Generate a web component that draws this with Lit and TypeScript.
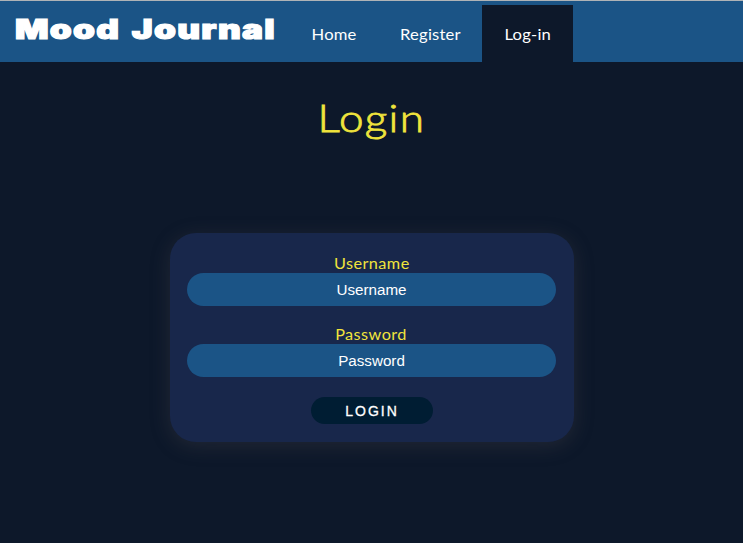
import { LitElement, html, css } from "lit";
import { customElement } from "lit/decorators.js";

@customElement("app-root")
export class AppRoot extends LitElement {
  static styles = css`
    :host { display: block; height: 543px; overflow: hidden; background: #0d182a; box-sizing: border-box; border-top: 1px solid #b0b3b6; font-family: Lato, "Open Sans", sans-serif; color: #fff; }
    * { box-sizing: border-box; }
    nav { height: 61px; background: #1b5486; display: flex; align-items: flex-start; }
    .brand { width: 290px; padding-left: 15px; height: 58px; white-space: nowrap; }
    .brand span { display: inline-block; font: 900 27px/58px Inter, sans-serif; -webkit-text-stroke: 1.2px #fff; transform: scaleX(1.3); transform-origin: left; letter-spacing: 1px; word-spacing: 2.5px; }
    .link { margin-top: 4px; height: 57px; line-height: 58px; font-size: 15.5px; text-align: center; color: #fff; text-decoration: none; white-space: nowrap; }
    .link span, h1 span, label span { display: inline-block; transform: scaleX(1.07); }
    .home { width: 89px; }
    .register { width: 103px; }
    .login { width: 91px; background: #0d182a; }
    .link span { letter-spacing: .2px; }
    h1 { margin: 30px 0 0; height: 50px; line-height: 50px; text-align: center; font-weight: 300; font-size: 38px; color: #f0e43c; -webkit-text-stroke: .8px #f0e43c; }
    h1 span { transform: scaleX(1.16); letter-spacing: 1.1px; }
    form { margin: 91px 0 0 170px; width: 404px; height: 209px; padding: 21px 18px 0 17px; border-radius: 26px; background: #18274b; box-shadow: 0 4px 20px rgba(82, 75, 78, .3); display: flex; flex-direction: column; align-items: center; }
    label { height: 19px; line-height: 19px; font-size: 14.5px; color: #f0e43c; }
    label span { transform: scaleX(1.12); letter-spacing: .4px; }
    input { display: block; width: 369px; height: 33px; margin: 0 0 19px; padding: 0; border: 0; border-radius: 17px; background: #1b5486; color: #fff; text-align: center; font: 15.2px "Liberation Sans", sans-serif; }
    input::placeholder { color: #fff; opacity: 1; }
    button { width: 122px; height: 27px; margin: 1px 0 0 1px; padding: 0; border: 0; border-radius: 14px; background: #001d33; color: #fff; font: 14px "Liberation Sans", sans-serif; letter-spacing: 2px; -webkit-text-stroke: .3px #fff; }
  `;

  render() {
    return html`
      <nav>
        <div class="brand"><span>Mood Journal</span></div>
        <a class="link home"><span>Home</span></a>
        <a class="link register"><span>Register</span></a>
        <a class="link login"><span>Log-in</span></a>
      </nav>
      <h1><span>Login</span></h1>
      <form>
        <label><span>Username</span></label>
        <input placeholder="Username" />
        <label><span>Password</span></label>
        <input type="password" placeholder="Password" />
        <button type="button">LOGIN</button>
      </form>
    `;
  }
}
